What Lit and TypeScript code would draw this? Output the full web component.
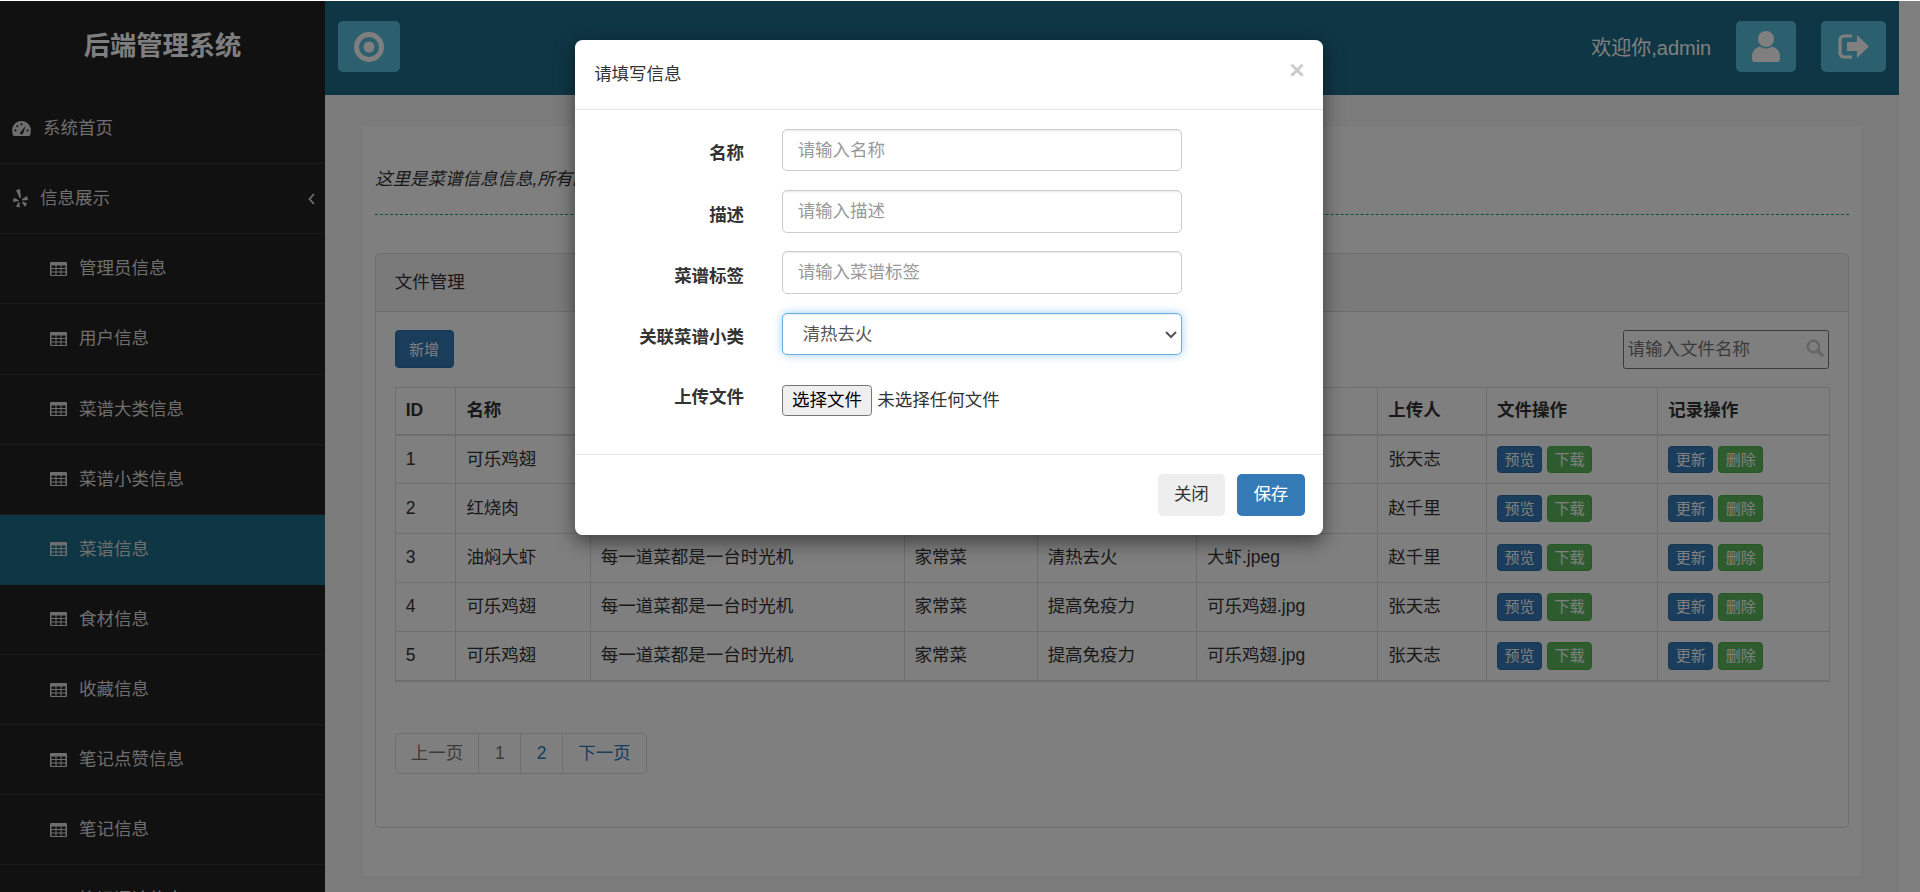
import { LitElement, html, css, svg } from 'lit';
import { customElement, property } from 'lit/decorators.js';

const tableCells = [1.5, 6.5, 11.5]
  .flatMap(x => [3.5, 7, 10.5].map(y => `M${x} ${y}h4v2.5h-4z`))
  .join('');

// width and height are css px, app-root scales them by 1.25
const icons = {
  dashboard: svg`<svg class="icon" width="15.2" height="12" viewBox="0 0 20 16">
    <path fill="currentColor" d="M10 0C4.5 0 0 4.5 0 10c0 2.2.5 4.2 1.3 6h17.4c.8-1.8 1.3-3.8 1.3-6C20 4.5 15.500 0 10 0z" />
    <g fill="#222">
      <circle cx="3.500" cy="10" r="1.100" /><circle cx="5.500" cy="5.500" r="1.100" />
      <circle cx="10" cy="3.500" r="1.100" /><circle cx="16.500" cy="10" r="1.100" />
      <path d="M8.500 12.500a1.700 1.700 0 0 0 3 1.200L14.500 5z" />
    </g>
  </svg>`,
  yelp: svg`<svg class="icon" width="12" height="15.2" viewBox="0 0 15 19">
    <path fill="currentColor" d="M3 1.200 7 0l1 8.800-1.200.4zM9.200 10l4.800-3 1 4-5.500.6zM9.200 12.500l4.800 1.800-1.800 3.700-3.500-4.800zM6.500 13.200l.2 5.300-3.800-1 3-4.800zM6 11.300.7 8.800 0 13l5.800-1z" />
  </svg>`,
  table: svg`<svg class="icon" width="13.6" height="11.2" viewBox="0 0 17 14">
    <path fill="currentColor" fill-rule="evenodd" d="M1 0h15a1 1 0 0 1 1 1v12a1 1 0 0 1-1 1H1a1 1 0 0 1-1-1V1a1 1 0 0 1 1-1z${tableCells}" />
  </svg>`,
  record: svg`<svg class="icon" width="24" height="24" viewBox="0 0 30 30">
    <circle cx="15" cy="15" r="12.500" fill="none" stroke="currentColor" stroke-width="5" />
    <circle cx="15" cy="15" r="5.500" fill="currentColor" />
  </svg>`,
  user: svg`<svg class="icon" width="22.4" height="24.8" viewBox="0 0 28 31">
    <circle cx="14" cy="8" r="8" fill="currentColor" />
    <path fill="currentColor" d="M0 26c0-6 3-9 8-10.500 2 1.500 4 2 6 2s4-.5 6-2c5 1.500 8 4.500 8 10.500v2a3 3 0 0 1-3 3H3a3 3 0 0 1-3-3z" />
  </svg>`,
  logout: svg`<svg class="icon" width="24.8" height="20" viewBox="0 0 31 25">
    <path fill="none" stroke="currentColor" stroke-width="3.200" d="M14 2H6a4 4 0 0 0-4 4v13a4 4 0 0 0 4 4h8" />
    <path fill="currentColor" d="M9 8h10V1l12 11.500L19 24v-7H9z" />
  </svg>`,
  search: svg`<svg class="search-icon" viewBox="0 0 18 18">
    <circle cx="7.500" cy="7.500" r="5.700" fill="none" stroke="currentColor" stroke-width="2.600" />
    <path stroke="currentColor" stroke-width="3.200" stroke-linecap="round" d="M12 12l4.200 4.200" />
  </svg>`,
  chevron: svg`<svg class="chevron" width="5.6" height="9.6" viewBox="0 0 7 12">
    <path fill="none" stroke="currentColor" stroke-width="1.800" d="M6 1 1.500 6 6 11" />
  </svg>`,
};

const subMenus = ['管理员信息', '用户信息', '菜谱大类信息', '菜谱小类信息', '菜谱信息', '食材信息', '收藏信息', '笔记点赞信息', '笔记信息', '笔记评论信息'];

@customElement('side-bar')
export class SideBar extends LitElement {
  @property({ type: String }) activeTab = '菜谱信息';

  static styles = css`
    :host {
      display: block;
      width: 260px;
      flex: none;
      background: #222;
      color: #ddd;
    }
    .title {
      height: 74.4px;
      padding-top: 22.4px;
      box-sizing: border-box;
      text-align: center;
      color: #fff;
      font-size: 21px;
      font-weight: 700;
      line-height: 28px;
    }
    .item {
      display: flex;
      align-items: center;
      height: 56.1px;
      box-sizing: border-box;
      border-bottom: 1px solid #363636;
      font-size: 14px;
    }
    .item svg { flex: none; }
    .item--home { padding-left: 9.6px; gap: 9.6px; }
    .item--group { padding-left: 10.4px; gap: 9.6px; }
    .item--sub { padding-left: 40px; gap: 9.6px; }
    .item.active { background: #1f6c88; border-bottom-color: #1f6c88; }
    .chevron { margin-left: auto; margin-right: 8px; }
  `;

  render() {
    return html`
      <div class="title">后端管理系统</div>
      <div class="item item--home">${icons.dashboard}系统首页</div>
      <div class="item item--group">${icons.yelp}信息展示${icons.chevron}</div>
      ${subMenus.map(
        name => html`<div class="item item--sub ${name === this.activeTab ? 'active' : ''}">
          ${icons.table}<span>${name}</span>
        </div>`
      )}
    `;
  }
}

const recipes = [
  ['1', '可乐鸡翅', '提高免疫力', '可乐鸡翅.jpg', '张天志'],
  ['2', '红烧肉', '提高免疫力', '红烧肉.jpg', '赵千里'],
  ['3', '油焖大虾', '清热去火', '大虾.jpeg', '赵千里'],
  ['4', '可乐鸡翅', '提高免疫力', '可乐鸡翅.jpg', '张天志'],
  ['5', '可乐鸡翅', '提高免疫力', '可乐鸡翅.jpg', '张天志'],
];

@customElement('file-panel')
export class FilePanel extends LitElement {
  static styles = css`
    :host {
      display: block;
      height: 460px;
      box-sizing: border-box;
      border: 1px solid #ddd;
      border-radius: 4px;
      background: #fff;
    }
    .heading {
      height: 46.4px;
      padding: 0 15px;
      display: flex;
      align-items: center;
      box-sizing: border-box;
      background: #f5f5f5;
      border-bottom: 1px solid #ddd;
      border-radius: 3px 3px 0 0;
    }
    .body { padding: 14px 15px; }
    .toolbar {
      display: flex;
      justify-content: space-between;
      align-items: center;
      margin-bottom: 14.4px;
    }
    .btn {
      border: 1px solid transparent;
      border-radius: 3px;
      color: #fff;
      font: inherit;
      padding: 0;
      box-sizing: border-box;
    }
    .btn--primary { background: #337ab7; border-color: #2e6da4; }
    .btn--success { background: #5cb85c; border-color: #4cae4c; }
    .btn--sm { width: 47px; height: 30.4px; font-size: 12px; }
    .btn--xs { width: 36px; height: 22px; font-size: 12px; }
    .search { position: relative; width: 165px; height: 31px; }
    .search input {
      width: 100%;
      height: 100%;
      box-sizing: border-box;
      border: 1px solid #767676;
      border-radius: 2px;
      padding: 1px 30px 1px 3px;
      font: inherit;
      outline: none;
      background: transparent;
    }
    .search input::placeholder { color: #757575; }
    .search-icon {
      position: absolute;
      right: 4.4px;
      top: 7px;
      width: 14.4px;
      height: 14.4px;
      color: #ccc;
    }
    table {
      width: 100%;
      table-layout: fixed;
      border-collapse: collapse;
      border-bottom: 2px solid #ddd;
    }
    th, td {
      box-sizing: border-box;
      height: 39.4px;
      border: 1px solid #ddd;
      padding: 8px;
      line-height: 20px;
      text-align: left;
      vertical-align: middle;
      white-space: nowrap;
      overflow: hidden;
    }
    th { height: 38px; border-bottom-width: 2px; font-weight: 700; }
    .actions { display: flex; gap: 4px; }
    .pagination {
      display: inline-flex;
      margin-top: 41.2px;
      border: 1px solid #ddd;
      border-radius: 4px;
      line-height: 31px;
      color: #337ab7;
    }
    .pagination span { padding: 0 12.5px; border-left: 1px solid #ddd; }
    .pagination span:first-child { border-left: 0; padding: 0 12px; }
    .pagination span:last-child { padding: 0 12px; }
    .pagination .off { color: #777; }
  `;

  render() {
    return html`
      <div class="heading">文件管理</div>
      <div class="body">
        <div class="toolbar">
          <button class="btn btn--primary btn--sm">新增</button>
          <div class="search">
            <input placeholder="请输入文件名称" />
            ${icons.search}
          </div>
        </div>
        <table>
          <colgroup>
            ${[48.5, 107.5, 251, 106.5, 127.5, 145, 87, 137, 137].map(
              width => html`<col style="width: ${width}px" />`
            )}
          </colgroup>
          <thead>
            <tr>
              ${['ID', '名称', '描述', '菜谱标签', '菜谱小类', '文件名称', '上传人', '文件操作', '记录操作'].map(
                name => html`<th>${name}</th>`
              )}
            </tr>
          </thead>
          <tbody>
            ${recipes.map(
              ([id, name, tag, file, owner]) => html`<tr>
                <td>${id}</td>
                <td>${name}</td>
                <td>每一道菜都是一台时光机</td>
                <td>家常菜</td>
                <td>${tag}</td>
                <td>${file}</td>
                <td>${owner}</td>
                <td>${this.actions('预览', '下载')}</td>
                <td>${this.actions('更新', '删除')}</td>
              </tr>`
            )}
          </tbody>
        </table>
        <div class="pagination">
          <span class="off">上一页</span><span class="off">1</span><span>2</span><span>下一页</span>
        </div>
      </div>
    `;
  }

  private actions(first: string, second: string) {
    return html`<div class="actions">
      <button class="btn btn--primary btn--xs">${first}</button>
      <button class="btn btn--success btn--xs">${second}</button>
    </div>`;
  }
}

@customElement('edit-dialog')
export class EditDialog extends LitElement {
  static styles = css`
    :host {
      display: block;
      width: 598.4px;
      background: #fff;
      border-radius: 6px;
      box-shadow: 0 5px 15px rgba(0, 0, 0, 0.5);
    }
    .header {
      display: flex;
      justify-content: space-between;
      padding: 15px;
      border-bottom: 1px solid #e5e5e5;
      line-height: 25.4px;
    }
    .close {
      color: #000;
      opacity: 0.2;
      font-size: 21px;
      font-weight: 700;
      line-height: 18px;
    }
    form {
      display: grid;
      grid-template-columns: 120px 320px;
      column-gap: 30px;
      row-gap: 15px;
      padding: 15px;
    }
    label {
      text-align: right;
      font-weight: 700;
      line-height: 20px;
      padding-top: 10px;
    }
    label.file { padding-top: 9px; }
    .control {
      width: 100%;
      height: 34px;
      box-sizing: border-box;
      padding: 6px 12px;
      border: 1px solid #ccc;
      border-radius: 4px;
      font: inherit;
      color: #555;
      background: #fff;
      outline: none;
      box-shadow: inset 0 1px 1px rgba(0, 0, 0, 0.075);
    }
    .control::placeholder { color: #999; }
    select.control {
      border-color: #66afe9;
      box-shadow: inset 0 1px 1px rgba(0, 0, 0, 0.075), 0 0 8px rgba(102, 175, 233, 0.6);
    }
    .file-row {
      display: flex;
      align-items: center;
      gap: 4px;
      padding-top: 9px;
      padding-bottom: 15px;
    }
    .file-button {
      width: 72.5px;
      height: 25px;
      padding: 0;
      font: inherit;
      color: #000;
      background: #efefef;
      border: 1px solid #767676;
      border-radius: 3px;
    }
    .footer {
      display: flex;
      justify-content: flex-end;
      gap: 9.6px;
      padding: 15px;
      border-top: 1px solid #e5e5e5;
    }
    .footer button {
      width: 54px;
      height: 34px;
      border: 1px solid transparent;
      border-radius: 4px;
      font: inherit;
    }
    .cancel { background: #eee; color: #333; }
    .save { background: #337ab7; border-color: #2e6da4; color: #fff; }
  `;

  render() {
    return html`
      <div class="header"><span>请填写信息</span><span class="close">×</span></div>
      <form>
        <label>名称</label>
        <input class="control" placeholder="请输入名称" />
        <label>描述</label>
        <input class="control" placeholder="请输入描述" />
        <label>菜谱标签</label>
        <input class="control" placeholder="请输入菜谱标签" />
        <label>关联菜谱小类</label>
        <select class="control"><option>清热去火</option></select>
        <label class="file">上传文件</label>
        <div class="file-row">
          <button type="button" class="file-button">选择文件</button>
          <span>未选择任何文件</span>
        </div>
      </form>
      <div class="footer">
        <button class="cancel">关闭</button>
        <button class="save">保存</button>
      </div>
    `;
  }
}

@customElement('app-root')
export class AppRoot extends LitElement {
  static styles = css`
    /* the reference was taken at 125% browser zoom, so sizes below are bootstrap's own */
    :host {
      display: block;
      zoom: 1.25;
      height: 713.6px;
      overflow: hidden;
      position: relative;
      background: #fff;
      color: #333;
      font-family: 'Liberation Sans', 'Noto Sans CJK SC', sans-serif;
      font-size: 14px;
      line-height: 20px;
    }
    .layout {
      display: flex;
      margin-top: 0.8px;
    }
    .main {
      flex: none;
      width: 1259px;
      height: 713px;
      background: #f6f6f6;
    }
    .topbar {
      display: flex;
      align-items: center;
      height: 75.2px;
      padding: 0 10px 0 10.4px;
      box-sizing: border-box;
      background: #1f6c88;
      color: #fff;
    }
    .topbar__button {
      display: flex;
      align-items: center;
      justify-content: center;
      height: 41px;
      margin-top: -2px;
      background: #5bc0de;
      border-radius: 4px;
    }
    .topbar__button--toggle { width: 49.6px; }
    .topbar__button--user { width: 48px; }
    .topbar__button--logout { width: 52px; margin-left: 20px; }
    .topbar__welcome {
      margin-left: auto;
      margin-right: 20px;
      font-size: 16px;
    }
    .content {
      margin: 24.8px 30px 0;
      height: 600px;
      padding: 33px 10px 0;
      box-sizing: border-box;
      background: #fff;
    }
    .intro {
      font-style: italic;
      padding-bottom: 17px;
      border-bottom: 1px dashed #1aa37a;
      margin-bottom: 31px;
    }
    .backdrop {
      position: absolute;
      inset: 0.8px 0 0 0;
      display: flex;
      justify-content: center;
      align-items: flex-start;
      padding: 31px 17px 0 0;
      background: rgba(0, 0, 0, 0.5);
    }
  `;

  render() {
    return html`
      <div class="layout">
        <side-bar></side-bar>
        <div class="main">
          <div class="topbar">
            <div class="topbar__button topbar__button--toggle">${icons.record}</div>
            <span class="topbar__welcome">欢迎你,admin</span>
            <div class="topbar__button topbar__button--user">${icons.user}</div>
            <div class="topbar__button topbar__button--logout">${icons.logout}</div>
          </div>
          <div class="content">
            <div class="intro">这里是菜谱信息信息,所有的信息都在这里展示</div>
            <file-panel></file-panel>
          </div>
        </div>
      </div>
      <div class="backdrop"><edit-dialog></edit-dialog></div>
    `;
  }
}
